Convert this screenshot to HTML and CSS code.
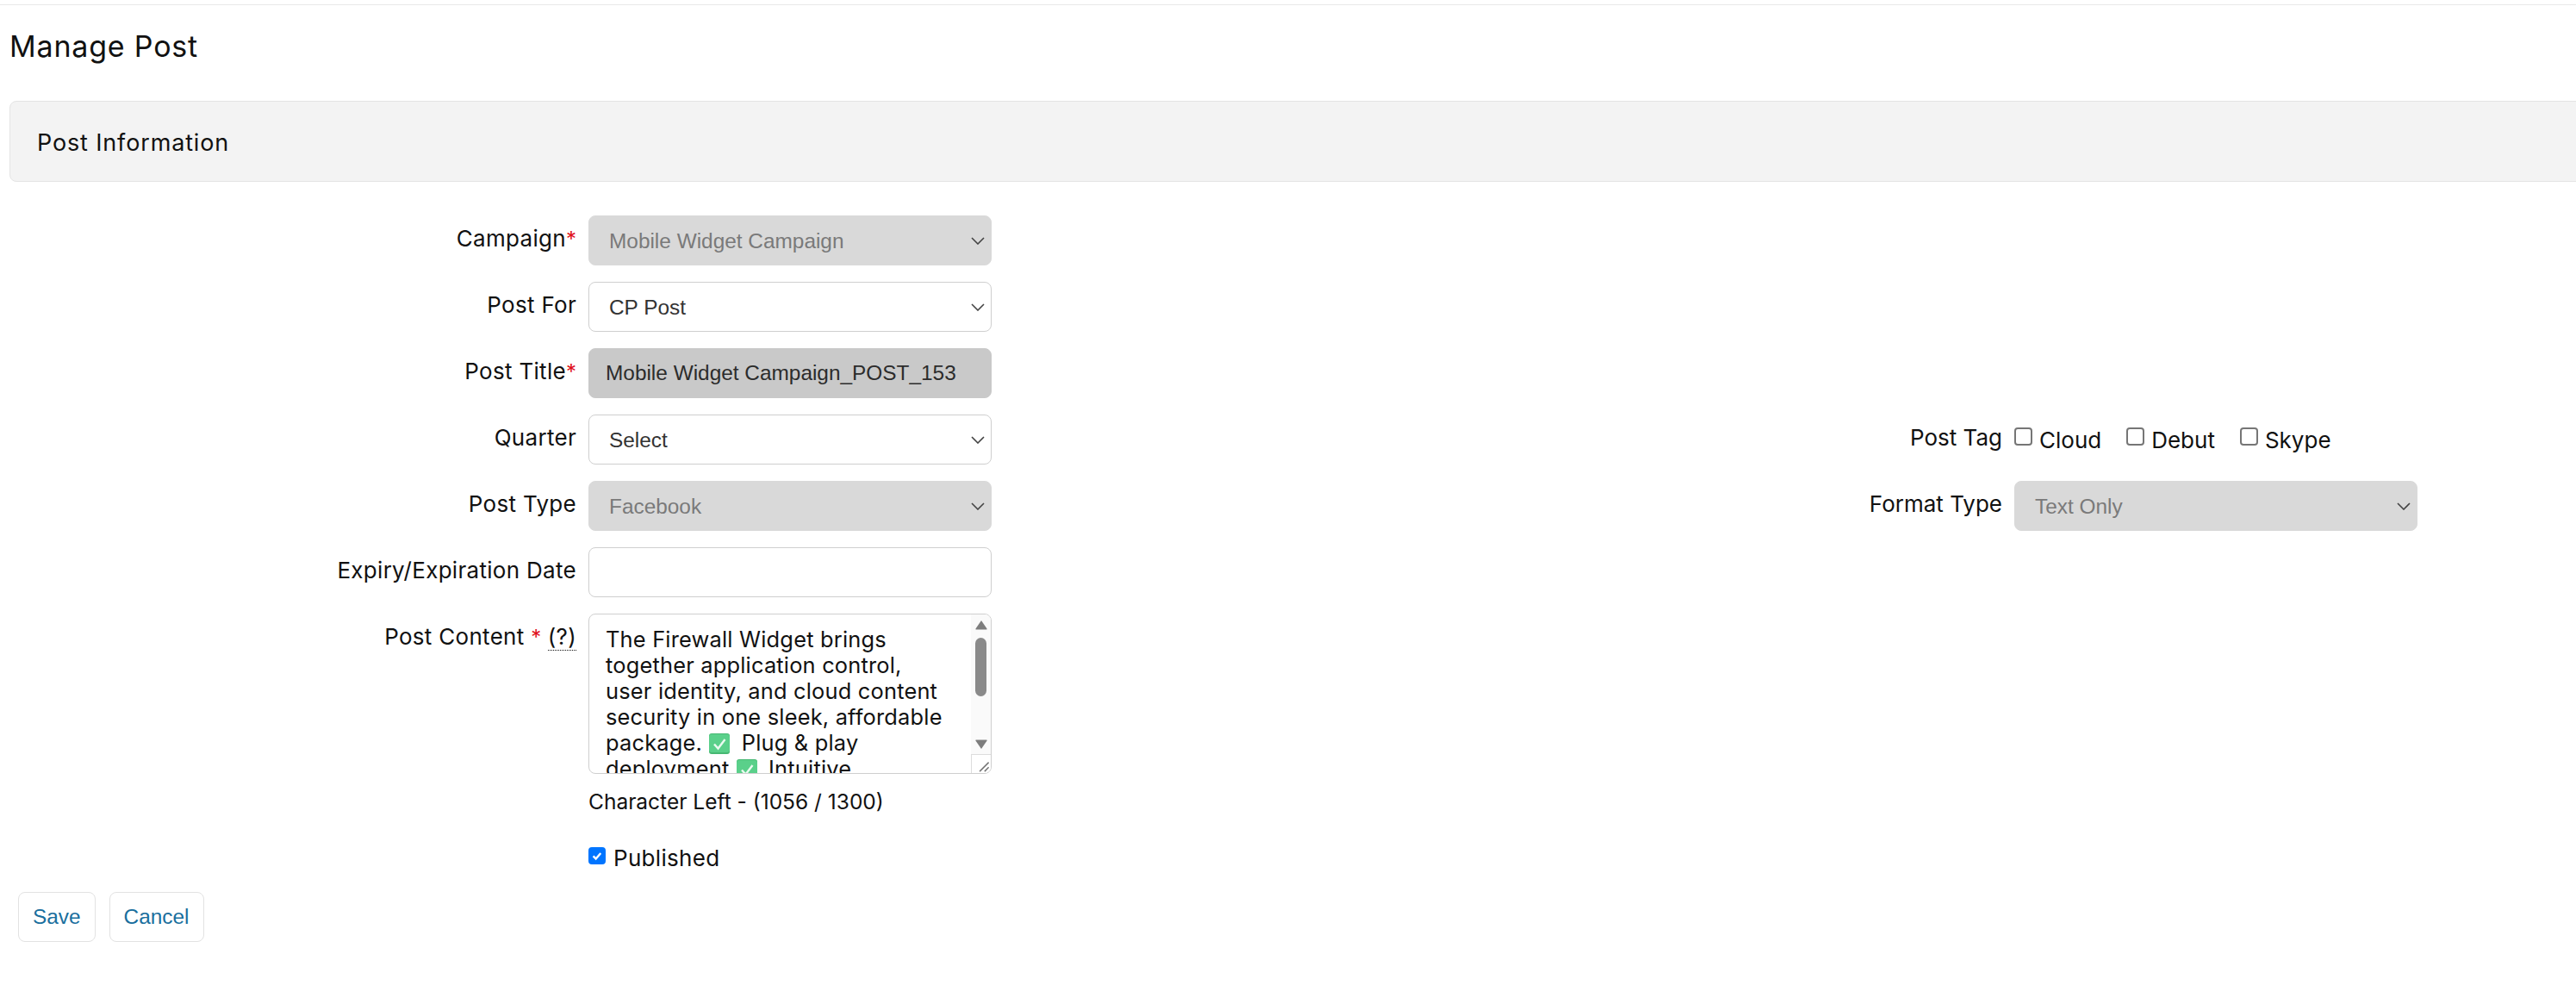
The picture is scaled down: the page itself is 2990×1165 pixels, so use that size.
FILE: index.html
```html
<!DOCTYPE html>
<html lang="en">
<head>
<meta charset="UTF-8" />
<meta name="viewport" content="width=device-width, initial-scale=1" />
<title>Manage Post</title>
<link rel="stylesheet" href="styles.css">
</head>
<body>

<div class="top-line"></div>
<h1 class="page-title">Manage Post</h1>

<div class="panel-head">Post Information</div>

<form class="post-form">
  <div class="row">
    <div class="field">
      <label class="field-label">Campaign<span class="req">*</span></label>
      <select class="control" disabled><option>Mobile Widget Campaign</option></select>
    </div>
  </div>
  <div class="row">
    <div class="field">
      <label class="field-label">Post For</label>
      <select class="control"><option>CP Post</option></select>
    </div>
  </div>
  <div class="row">
    <div class="field">
      <label class="field-label">Post Title<span class="req">*</span></label>
      <input class="control title-input" type="text" value="Mobile Widget Campaign_POST_153" readonly>
    </div>
  </div>
  <div class="row">
    <div class="field">
      <label class="field-label">Quarter</label>
      <select class="control"><option>Select</option></select>
    </div>
    <div class="field field-right">
      <label class="field-label">Post Tag</label>
      <div class="tag-list">
        <label class="tag"><input class="check" type="checkbox">Cloud</label>
        <label class="tag"><input class="check" type="checkbox">Debut</label>
        <label class="tag"><input class="check" type="checkbox">Skype</label>
      </div>
    </div>
  </div>
  <div class="row">
    <div class="field">
      <label class="field-label">Post Type</label>
      <select class="control" disabled><option>Facebook</option></select>
    </div>
    <div class="field field-right">
      <label class="field-label">Format Type</label>
      <select class="control" disabled><option>Text Only</option></select>
    </div>
  </div>
  <div class="row">
    <div class="field">
      <label class="field-label">Expiry/Expiration Date</label>
      <input class="control" type="text">
    </div>
  </div>
  <div class="row row-content">
    <div class="field">
      <label class="field-label">Post Content <span class="req">*</span> <abbr class="hint" title="Help">(?)</abbr></label>
      <div class="content-box">
        <div class="content-text">The Firewall Widget brings together application control, user identity, and cloud content security in one sleek, affordable package. <svg class="check-emoji" viewBox="0 0 24 24"><rect width="24" height="24" rx="3" fill="#46b872"/><rect y="1" width="24" height="21" rx="3" fill="#5ad08a"/><path d="M6 12.5l4.5 5L18.5 7" fill="none" stroke="#eafaf0" stroke-width="2.4"/></svg> Plug &amp; play deployment <svg class="check-emoji" viewBox="0 0 24 24"><rect width="24" height="24" rx="3" fill="#46b872"/><rect y="1" width="24" height="21" rx="3" fill="#5ad08a"/><path d="M6 12.5l4.5 5L18.5 7" fill="none" stroke="#eafaf0" stroke-width="2.4"/></svg> Intuitive</div>
        <div class="fake-scroll">
          <svg class="scroll-arrow" viewBox="0 0 14 11"><path d="M7 0l6.5 9.5q.5 1-.5 1H1q-1 0-.5-1z"/></svg>
          <div class="scroll-thumb"></div>
          <svg class="scroll-arrow scroll-arrow-down" viewBox="0 0 14 11"><path d="M7 11L.5 1.5q-.5-1 .5-1h12q1 0 .5 1z"/></svg>
        </div>
        <div class="resize-corner">
          <svg viewBox="0 0 22 22"><path d="M9 20L20 9M15 20l5-5" stroke="#777" stroke-width="1.6" fill="none"/></svg>
        </div>
      </div>
    </div>
  </div>

  <div class="extra char-left">Character Left - (1056 / 1300)</div>
  <label class="extra published"><input class="check" type="checkbox" checked>Published</label>

  <div class="actions">
    <button type="button" class="btn">Save</button>
    <button type="button" class="btn">Cancel</button>
  </div>
</form>

</body>
</html>
```

FILE: styles.css
```css
html, body {
  margin: 0;
  height: 100%;
  overflow: hidden;
  background: #fff;
}
body {
  font-family: 'Inter', 'Liberation Sans', sans-serif;
  font-size: 26px;
  letter-spacing: 0.3px;
  color: #111;
}
.top-line {
  height: 5px;
  border-bottom: 1px solid #e9e9e9;
}
.page-title {
  margin: 28px 0 43px 11px;
  font-size: 34px;
  line-height: 40px;
  font-weight: 400;
  letter-spacing: 0.8px;
}
.panel-head {
  display: flex;
  align-items: center;
  box-sizing: border-box;
  height: 94px;
  margin: 0 -10px 39px 11px;
  padding: 3px 0 0 31px;
  background: #f3f3f3;
  border: 1px solid #e4e4e4;
  border-radius: 8px;
  font-size: 27px;
  letter-spacing: 0.85px;
}

/* form rows */
.post-form {
  padding-left: 11px;
}
.row {
  display: flex;
  height: 58px;
  margin-bottom: 19px;
}
.row-content {
  height: 186px;
  margin-bottom: 17px;
}
.field {
  display: flex;
  gap: 14px;
}
.field-right {
  margin-left: 963px;
}
.field-label {
  width: 658px;
  padding-top: 12px;
  line-height: 30px;
  text-align: right;
}
.field-right .field-label {
  width: 210px;
  letter-spacing: 0;
}
.req {
  color: #e0101c;
  font-size: 24px;
  letter-spacing: 0;
}
.hint {
  text-decoration: none;
  border-bottom: 1px dotted #111;
}

/* controls */
.control {
  box-sizing: border-box;
  width: 468px;
  height: 58px;
  padding: 0 30px 0 23px;
  background: #fff;
  border: 1px solid #cfcfcf;
  border-radius: 8px;
  font-family: 'Liberation Sans', Arial, sans-serif;
  font-size: 24.4px;
  letter-spacing: 0;
  color: #333;
}
select.control {
  appearance: none;
  background-image: url("data:image/svg+xml,%3Csvg xmlns='http://www.w3.org/2000/svg' width='16' height='9'%3E%3Cpath d='M1 1l7 7 7-7' fill='none' stroke='%23444' stroke-width='1.6'/%3E%3C/svg%3E");
  background-repeat: no-repeat;
  background-position: right 7px center;
}
.control:disabled {
  background-color: #d9d9d9;
  border-color: #d9d9d9;
  color: #7a7a7a;
  opacity: 1;
}
.title-input {
  padding-left: 19px;
  background: #c9c9c9;
  border-color: #c9c9c9;
  color: #2c2c2c;
}

/* checkboxes */
.check {
  appearance: none;
  box-sizing: border-box;
  width: 21px;
  height: 21px;
  margin: 0;
  background: #fff;
  border: 2px solid #767676;
  border-radius: 4px;
}
.check:checked {
  background: #0075ff url("data:image/svg+xml,%3Csvg xmlns='http://www.w3.org/2000/svg' viewBox='0 0 20 20'%3E%3Cpath d='M4.5 10.5l3.8 3.8 7-8' fill='none' stroke='%23fff' stroke-width='3'/%3E%3C/svg%3E") center / 100% no-repeat;
  border-color: #0075ff;
}
.tag-list {
  display: flex;
  gap: 29px;
  padding-top: 15px;
  letter-spacing: 0;
}
.tag {
  display: flex;
  gap: 8px;
  line-height: 30px;
}

/* looks like a textarea, but holds emoji pictures */
.content-box {
  position: relative;
  box-sizing: border-box;
  width: 468px;
  height: 186px;
  border: 1px solid #cfcfcf;
  border-radius: 8px;
  overflow: hidden;
}
.content-text {
  width: 396px;
  padding: 14px 0 0 19px;
  line-height: 30px;
  font-size: 25.4px;
  letter-spacing: 0.2px;
}
.check-emoji {
  width: 24px;
  height: 24px;
  margin: 0 6px 0 1px;
  vertical-align: -4px;
}
.fake-scroll {
  position: absolute;
  top: 0;
  right: 0;
  width: 23px;
  height: 162px;
  background: #fafafa;
}
.scroll-arrow {
  position: absolute;
  top: 7px;
  left: 5px;
  width: 14px;
  height: 11px;
  fill: #7d7d7d;
}
.scroll-arrow-down {
  top: 145px;
}
.scroll-thumb {
  position: absolute;
  top: 27px;
  left: 5px;
  width: 13px;
  height: 68px;
  background: #8a8a8a;
  border-radius: 7px;
}
.resize-corner {
  position: absolute;
  right: 0;
  bottom: 0;
  box-sizing: border-box;
  width: 23px;
  height: 22px;
  background: #fff;
  border-top: 1px solid #ddd;
  border-left: 1px solid #ddd;
}
.resize-corner svg {
  display: block;
  width: 100%;
  height: 100%;
}

/* below the content box */
.extra {
  display: block;
  margin-left: 672px;
  line-height: 30px;
}
.char-left {
  margin-bottom: 36px;
  font-size: 24.5px;
  letter-spacing: 0;
}
.published {
  display: flex;
  gap: 9px;
}
.published .check {
  width: 20px;
  height: 20px;
  margin-top: 2px;
}

.actions {
  display: flex;
  gap: 16px;
  margin: 24px 0 0 10px;
}
.btn {
  height: 58px;
  padding: 0 16px;
  background: #fff;
  border: 1px solid #e2e2e2;
  border-radius: 8px;
  font-family: 'Liberation Sans', Arial, sans-serif;
  font-size: 24.4px;
  color: #1a6f9e;
}
```
